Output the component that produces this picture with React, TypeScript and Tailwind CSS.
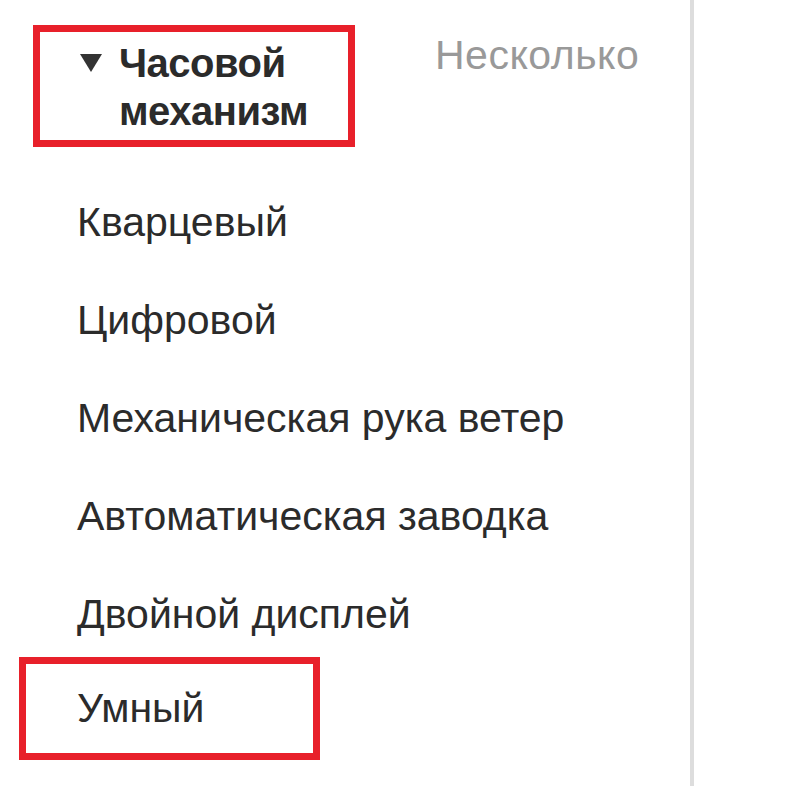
import React from 'react';

const items = ['Кварцевый', 'Цифровой', 'Механическая рука ветер', 'Автоматическая заводка', 'Двойной дисплей'];

export default function App() {
  return (
    <div className="flex h-[786px] w-[800px] overflow-hidden bg-white font-['Liberation_Sans',Arial,sans-serif] text-[#2b2b2b]">
      <div className="w-[694px] shrink-0 border-r-4 border-[#dddddd]">
        <div className="flex items-start pt-[25px]">
          <div className="ml-[33px] flex h-[122px] w-[322px] border-[7px] border-[#e8202a] pl-[39px] pt-[7px]">
            <svg width="24" height="20" viewBox="0 0 24 20" className="mt-[14px] shrink-0">
              <path d="M1 1 H23 L12 19 Z" fill="#333" />
            </svg>
            <div className="ml-[16px] text-[40px] font-bold leading-[48px] tracking-[-0.5px]">
              Часовой
              <br />
              механизм
            </div>
          </div>
          <div className="ml-[80px] mt-[6px] text-[41px] leading-[48px] text-[#999999] tracking-[0.5px]">Несколько</div>
        </div>
        <ul className="mt-[26px]">
          {items.map((t) => (
            <li key={t} className="pl-[77px] text-[41px] leading-[98px]">
              {t}
            </li>
          ))}
        </ul>
        <div className="ml-[19px] mt-[-6px] h-[103px] w-[301px] border-[7px] border-[#e8202a] pl-[51px] text-[41px] leading-[89px]">
          Умный
        </div>
      </div>
      <div className="flex-1" />
    </div>
  );
}
